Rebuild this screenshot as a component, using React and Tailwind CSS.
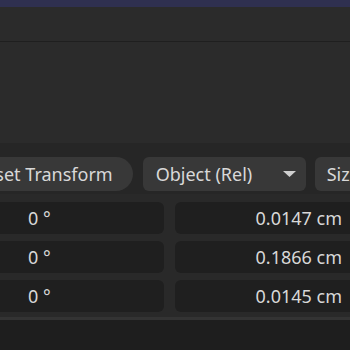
import React from 'react';

const rows = [
  { angle: '0 °', size: '0.0147 cm' },
  { angle: '0 °', size: '0.1866 cm' },
  { angle: '0 °', size: '0.0145 cm' },
];

const App = () => {
  return (
    <div
      className="w-[350px] h-[350px] overflow-hidden flex flex-col bg-[#1e1e1e] text-[#d8d8d8]"
      style={{ fontFamily: '"Noto Sans", "Open Sans", sans-serif' }}
    >
      <div className="h-[7px] shrink-0 bg-[#2f3050]" />
      <div className="h-[35px] shrink-0 bg-[#2b2b2b] border-b border-[#1f1f1f]" />
      <div className="h-[102px] shrink-0 bg-[#2b2b2b] border-b border-[#262626]" />

      <div className="shrink-0 bg-[#262626] pt-[13px] pb-[3px] flex items-center whitespace-nowrap">
        <div className="-ml-[46px] shrink-0 h-[34px] rounded-full bg-[#383838] pl-[20px] pr-[20px] flex items-center text-[18px]">
          Reset Transform
        </div>
        <div className="ml-[10px] shrink-0 w-[163px] h-[34px] rounded-md bg-[#383838] pl-[13px] pr-[8px] flex items-center justify-between text-[18px]">
          <span>Object (Rel)</span>
          <svg width="15" height="8" viewBox="0 0 15 8" className="mr-[1px]">
            <path d="M1 1 L14 1 L7.5 7 Z" fill="#cfcfcf" />
          </svg>
        </div>
        <div className="ml-[9px] shrink-0 w-[80px] h-[34px] rounded-md bg-[#383838] pl-[12px] flex items-center text-[18px]">
          Size
        </div>
      </div>

      <div className="shrink-0 bg-[#292929] pt-[8px] pb-[5px] flex flex-col gap-[7px] border-b-[3px] border-[#333333]">
        {rows.map((r, i) => (
          <div key={i} className="flex gap-[11px] whitespace-nowrap">
            <div className="-ml-[8px] shrink-0 w-[172px] h-[32px] rounded-md bg-[#1f1f1f] pl-[36px] flex items-center text-[18px]">
              {r.angle}
            </div>
            <div className="shrink-0 w-[183px] h-[32px] rounded-md bg-[#1f1f1f] pr-[16px] flex items-center justify-end text-[18px]">
              {r.size}
            </div>
          </div>
        ))}
      </div>
      <div className="flex-1 bg-[#1e1e1e]" />
    </div>
  );
};

export default App;
